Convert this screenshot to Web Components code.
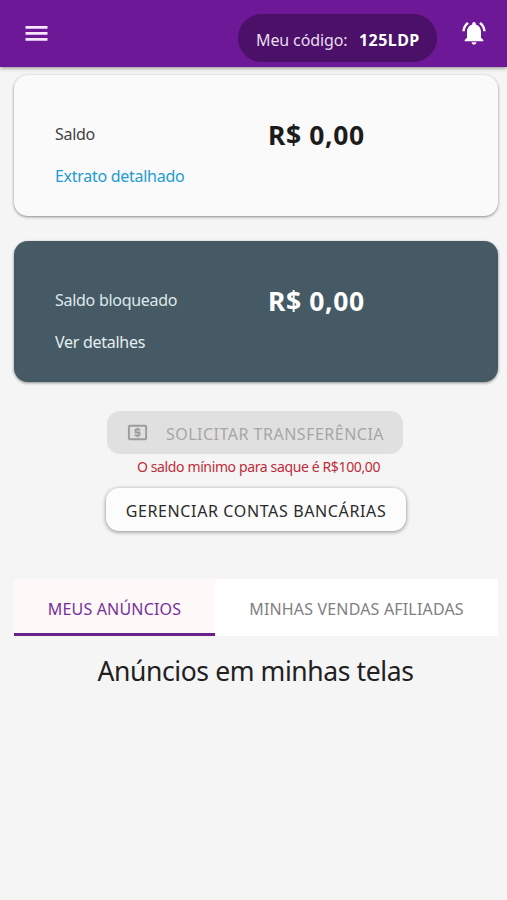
<!DOCTYPE html>
<html lang="pt-BR">
<head>
<meta charset="utf-8">
<title>Saldo</title>
<style>
  html, body {
    height: 100%;
  }

  body {
    margin: 0;
    background-color: #f5f5f5;
    font-family: "Noto Sans", "Open Sans", sans-serif;
    color: #212121;
    overflow: hidden;
  }
</style>
</head>
<body>
<wallet-app></wallet-app>

<script>
/**
 * Creates a template from a markup string.
 *
 * @param {string} html - The markup.
 * @returns {HTMLTemplateElement} The template.
 */
const createTemplate = (html) => {
  const template = document.createElement('template')
  template.innerHTML = html
  return template
}

/**
 * Top bar, with the menu button, the user's code and the notifications.
 */
const topbarTemplate = createTemplate(`
  <style>
    :host {
      display: flex;
      align-items: flex-start;
      box-sizing: border-box;
      height: 67px;
      padding: 14px 19px 0 23px;
      background-color: #6d1896;
      box-shadow: 0 1px 4px rgba(0, 0, 0, 0.45);
      color: #fff;
    }

    svg {
      display: block;
      fill: currentColor;
    }

    .menu {
      width: 27px;
      height: 40px;
      color: #f8e6ff;
    }

    .code {
      display: flex;
      align-items: center;
      box-sizing: border-box;
      width: 199px;
      height: 48px;
      margin-left: auto;
      padding: 3px 0 0 18px;
      border-radius: 24px;
      background-color: #4b1068;
      font-size: 16px;
      white-space: nowrap;
    }

    .label {
      width: 103px;
      color: #e9dcf0;
      letter-spacing: -0.12px;
    }

    .value {
      font-weight: 700;
      letter-spacing: 0.45px;
    }

    .bell {
      width: 28px;
      height: 28px;
      margin: 5px 0 0 23px;
    }
  </style>

  <svg class="menu" viewBox="0 0 27 40">
    <path d="M2.5 12h22v2.7h-22zM2.5 18h22v2.7h-22zM2.5 24h22v2.7h-22z"/>
  </svg>
  <div class="code">
    <span class="label">Meu código:</span>
    <span class="value"><slot></slot></span>
  </div>
  <svg class="bell" viewBox="0 0 24 24">
    <path d="M7.58 4.08L6.15 2.65C3.75 4.48 2.17 7.3 2.03 10.5h2c.15-2.65 1.51-4.97 3.55-6.42zm12.39 6.42h2c-.15-3.2-1.73-6.02-4.12-7.85l-1.42 1.43c2.02 1.45 3.39 3.77 3.54 6.42zM18 11c0-3.07-1.64-5.64-4.5-6.32V4c0-.83-.67-1.5-1.5-1.5s-1.5.67-1.5 1.5v.68C7.63 5.36 6 7.92 6 11v5l-2 2v1h16v-1l-2-2v-5zm-6 11c.14 0 .27-.01.4-.04.65-.14 1.18-.58 1.44-1.18.1-.24.15-.5.15-.78h-4c.01 1.1.9 2 2.01 2z"/>
  </svg>
`)

customElements.define('wallet-topbar',
  class extends HTMLElement {
    constructor () {
      super()
      this.attachShadow({ mode: 'open' })
        .appendChild(topbarTemplate.content.cloneNode(true))
    }
  }
)

/**
 * Balance card. The "blocked" attribute gives the dark variant.
 */
const cardTemplate = createTemplate(`
  <style>
    :host {
      --link-color: #1f9bd1;
      display: grid;
      grid-template-columns: 213px 1fr;
      grid-template-rows: 42px 42px;
      align-items: center;
      box-sizing: border-box;
      height: 141px;
      padding: 38px 40px 0 41px;
      border-radius: 14px;
      background-color: #fafafa;
      box-shadow: 0 1px 3px rgba(0, 0, 0, 0.45);
      color: #424242;
      font-size: 16px;
      letter-spacing: -0.28px;
      white-space: nowrap;
    }

    :host([blocked]) {
      --link-color: #e6eef2;
      background-color: #455a64;
      color: #dfe8ec;
    }

    .amount {
      padding-top: 2px;
      color: #1c1c1c;
      font-size: 26.5px;
      font-weight: 700;
      letter-spacing: 0.6px;
    }

    :host([blocked]) .amount {
      color: #fff;
    }

    .link {
      color: var(--link-color);
    }
  </style>

  <span class="title"><slot name="title"></slot></span>
  <span class="amount"><slot name="amount"></slot></span>
  <span class="link"><slot name="link"></slot></span>
`)

customElements.define('balance-card',
  class extends HTMLElement {
    constructor () {
      super()
      this.attachShadow({ mode: 'open' })
        .appendChild(cardTemplate.content.cloneNode(true))
    }
  }
)

/**
 * Raised button with an optional icon.
 */
const buttonTemplate = createTemplate(`
  <style>
    :host {
      display: flex;
      align-items: center;
      justify-content: center;
      box-sizing: border-box;
      width: 300px;
      height: 43px;
      padding-top: 2px;
      border-radius: 13px;
      background-color: #fcfcfc;
      box-shadow: 0 1px 4px rgba(0, 0, 0, 0.45);
      color: #2b2b2b;
      font-size: 16px;
      letter-spacing: var(--button-spacing, 0.5px);
      white-space: nowrap;
    }

    :host([disabled]) {
      width: 296px;
      background-color: #e0e0e0;
      box-shadow: none;
      color: #a6a6a6;
    }
  </style>
  <slot name="icon"></slot>
  <slot></slot>
`)

customElements.define('wallet-button',
  class extends HTMLElement {
    constructor () {
      super()
      this.attachShadow({ mode: 'open' })
        .appendChild(buttonTemplate.content.cloneNode(true))
    }
  }
)

/**
 * A tab, underlined when it is selected.
 */
const tabTemplate = createTemplate(`
  <style>
    :host {
      display: flex;
      align-items: center;
      justify-content: center;
      box-sizing: border-box;
      height: 57px;
      padding-top: 5px;
      border-bottom: 3px solid transparent;
      background-color: #fff;
      color: #808080;
      font-size: 16px;
      letter-spacing: 0.17px;
      white-space: nowrap;
    }

    :host([selected]) {
      border-bottom-color: #66218c;
      background-color: #fff8f8;
      color: #74309a;
    }
  </style>
  <slot></slot>
`)

customElements.define('wallet-tab',
  class extends HTMLElement {
    constructor () {
      super()
      this.attachShadow({ mode: 'open' })
        .appendChild(tabTemplate.content.cloneNode(true))
    }
  }
)

/**
 * The whole page.
 */
const appTemplate = createTemplate(`
  <style>
    :host {
      display: block;
    }

    main {
      display: flex;
      flex-direction: column;
      padding: 8px 9px 0 14px;
    }

    balance-card + balance-card {
      margin-top: 25px;
    }

    .actions {
      display: flex;
      flex-direction: column;
      align-items: center;
      margin: 29px 0 0 0;
    }

    .money {
      width: 23px;
      height: 23px;
      margin: 0 17px 2px 0;
      fill: #9c9c9c;
    }

    .transfer {
      --button-spacing: 0.5px;
      margin-right: 2px;
    }

    .manage {
      --button-spacing: 0.63px;
    }

    .hint {
      height: 34px;
      margin: 0;
      padding-left: 5px;
      color: #bd2c3a;
      font-size: 14px;
      line-height: 25px;
      letter-spacing: -0.37px;
      white-space: nowrap;
    }

    .tabs {
      display: grid;
      grid-template-columns: 201px 1fr;
      margin-top: 48px;
    }

    h1 {
      margin: 16px 0 0;
      padding-right: 1px;
      font-size: 26.5px;
      font-weight: 400;
      line-height: 38px;
      letter-spacing: -0.4px;
      text-align: center;
      white-space: nowrap;
    }
  </style>

  <wallet-topbar>125LDP</wallet-topbar>
  <main>
    <balance-card>
      <span slot="title">Saldo</span>
      <span slot="amount">R$ 0,00</span>
      <span slot="link">Extrato detalhado</span>
    </balance-card>
    <balance-card blocked>
      <span slot="title">Saldo bloqueado</span>
      <span slot="amount">R$ 0,00</span>
      <span slot="link">Ver detalhes</span>
    </balance-card>

    <div class="actions">
      <wallet-button class="transfer" disabled>
        <svg class="money" slot="icon" viewBox="0 0 24 24">
          <path d="M11 17h2v-1h1c.55 0 1-.45 1-1v-3c0-.55-.45-1-1-1h-3v-1h4V8h-2V7h-2v1h-1c-.55 0-1 .45-1 1v3c0 .55.45 1 1 1h3v1H9v2h2v1zm9-13H4c-1.11 0-1.99.89-1.99 2L2 18c0 1.11.89 2 2 2h16c1.11 0 2-.89 2-2V6c0-1.11-.89-2-2-2zm0 14H4V6h16v12z"/>
        </svg>
        SOLICITAR TRANSFERÊNCIA
      </wallet-button>
      <p class="hint">O saldo mínimo para saque é R$100,00</p>
      <wallet-button class="manage">GERENCIAR CONTAS BANCÁRIAS</wallet-button>
    </div>

    <div class="tabs">
      <wallet-tab selected>MEUS ANÚNCIOS</wallet-tab>
      <wallet-tab>MINHAS VENDAS AFILIADAS</wallet-tab>
    </div>
    <h1>Anúncios em minhas telas</h1>
  </main>
`)

customElements.define('wallet-app',
  class extends HTMLElement {
    constructor () {
      super()
      this.attachShadow({ mode: 'open' })
        .appendChild(appTemplate.content.cloneNode(true))
    }
  }
)
</script>
</body>
</html>
